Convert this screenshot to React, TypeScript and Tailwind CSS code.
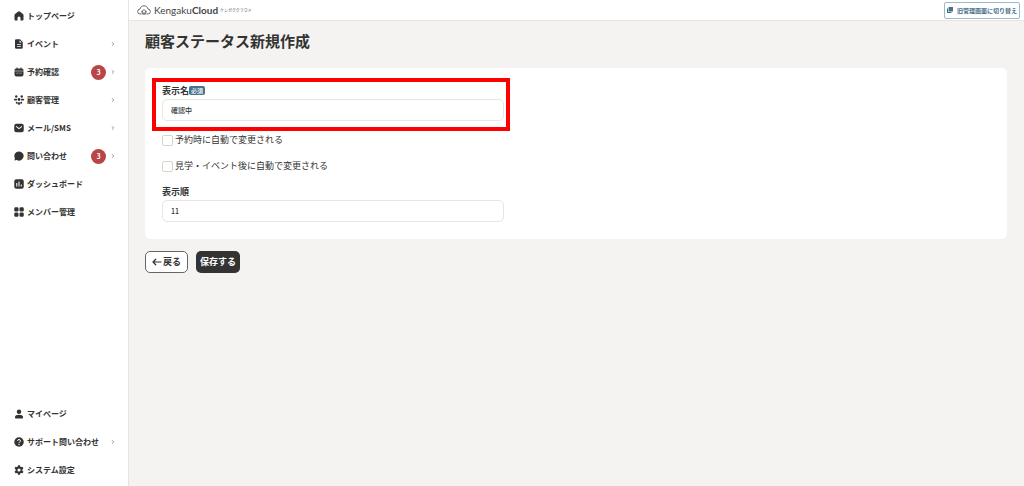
import { useState } from 'react';
import type { ReactNode } from 'react';
import { ChevronRight } from 'lucide-react';

interface NavItem {
  label: string;
  icon: ReactNode;
  badge?: number;
  expandable?: boolean;
}

const mainNav: NavItem[] = [
  { label: 'トップページ', icon: <path d="M8.500 1.200 2 6.200A3 3 0 0 0 1 8.500V17a2 2 0 0 0 2 2h4v-5a3 3 0 0 1 6 0v5h4a2 2 0 0 0 2-2V8.500a3 3 0 0 0-1-2.300l-6.500-5a2.500 2.500 0 0 0-3 0Z" /> },
  {
    label: 'イベント',
    expandable: true,
    icon: <path fillRule="evenodd" d="M4.500.5H12l5.500 5.500v11a2.500 2.500 0 0 1-2.500 2.500H4.500A2.500 2.500 0 0 1 2 17V3A2.500 2.500 0 0 1 4.500.5ZM11 2.500V7h4.500ZM6 10v1.500h8V10Zm0 4v1.500h8V14Z" />,
  },
  {
    label: '予約確認',
    badge: 3,
    expandable: true,
    icon: <path fillRule="evenodd" d="M5 1h2v2h6V1h2v2h1a3 3 0 0 1 3 3v1.500H1V6a3 3 0 0 1 3-3h1ZM1 8.500h18V15a4 4 0 0 1-4 4H5a4 4 0 0 1-4-4ZM5 11.500V13h2v-1.500Zm4 0V13h2v-1.500Zm4 0V13h2v-1.500Z" />,
  },
  {
    label: '顧客管理',
    expandable: true,
    icon: (
      <>
        <circle cx="4.500" cy="3" r="2.400" />
        <circle cx="15.500" cy="3" r="2.400" />
        <rect x="0" y="7.500" width="6" height="3.500" rx="1.700" />
        <rect x="14" y="7.500" width="6" height="3.500" rx="1.700" />
        <circle cx="10" cy="9" r="2.800" />
        <circle cx="5.500" cy="15.500" r="2" />
        <circle cx="14.500" cy="15.500" r="2" />
        <rect x="7.500" y="14.500" width="5" height="5" rx="2" />
      </>
    ),
  },
  {
    label: 'メール/SMS',
    expandable: true,
    icon: <path fillRule="evenodd" d="M4.500 1.500h11A4 4 0 0 1 19.500 5.500v9a4 4 0 0 1-4 4h-11a4 4 0 0 1-4-4v-9a4 4 0 0 1 4-4ZM4.500 6l-1 1.500L10 12.500l6.500-5L15.500 6 10 10Z" />,
  },
  {
    label: '問い合わせ',
    badge: 3,
    expandable: true,
    icon: <path d="M10 .8a9.200 9.200 0 1 1-4.300 17.300L1 19.200l.8-4.800A9.200 9.200 0 0 1 10 .8Z" />,
  },
  {
    label: 'ダッシュボード',
    icon: <path fillRule="evenodd" d="M4.500.5h11a4 4 0 0 1 4 4v11a4 4 0 0 1-4 4h-11a4 4 0 0 1-4-4v-11a4 4 0 0 1 4-4ZM4.500 8v7h2V8ZM9 5v10h2V5Zm4.500 6v4h2v-4Z" />,
  },
  {
    label: 'メンバー管理',
    icon: (
      <>
        <rect x="0.500" y="0.500" width="8.500" height="8.500" rx="2.500" />
        <rect x="11" y="0.500" width="8.500" height="8.500" rx="2.500" />
        <rect x="0.500" y="11" width="8.500" height="8.500" rx="2.500" />
        <rect x="11" y="11" width="8.500" height="8.500" rx="2.500" />
      </>
    ),
  },
];

const subNav: NavItem[] = [
  {
    label: 'マイページ',
    icon: (
      <>
        <circle cx="10" cy="5.500" r="4.500" />
        <path d="M2 16c0-3 3.500-4.500 8-4.500s8 1.500 8 4.500v1.500a1.500 1.500 0 0 1-1.500 1.500h-13A1.500 1.500 0 0 1 2 17.500Z" />
      </>
    ),
  },
  {
    label: 'サポート問い合わせ',
    expandable: true,
    icon: (
      <>
        <circle cx="10" cy="10" r="9.500" />
        <path d="M7 7.800C7 4 13 4 13 7.800c0 2.200-3 2.200-3 4.400" fill="none" stroke="white" strokeWidth="2" />
        <circle cx="10" cy="15" r="1.300" fill="white" />
      </>
    ),
  },
  {
    label: 'システム設定',
    icon: <path fillRule="evenodd" d="M8 .5h4l.6 2.800 1.600.9 2.700-.9 2 3.400-2.100 1.900v2.800l2.100 1.900-2 3.400-2.700-.9-1.600.9-.6 2.700H8l-.6-2.700-1.600-.9-2.700.9-2-3.400 2.100-1.900V8.600L1.100 6.700l2-3.400 2.700.9 1.600-.9ZM10 6.800a3.200 3.200 0 1 0 0 6.400 3.200 3.200 0 0 0 0-6.400Z" />,
  },
];

function NavList({ items }: { items: NavItem[] }) {
  return (
    <ul>
      {items.map((item) => (
        <li key={item.label}>
          <a href="#" className="flex h-7 items-center pr-3 pl-3.5 text-[8px] font-bold hover:bg-[#f4f3f1]">
            <svg viewBox="0 0 20 20" className="mr-[3px] h-2.5 w-2.5 shrink-0 fill-current">
              {item.icon}
            </svg>
            <span className="flex-1 whitespace-nowrap">{item.label}</span>
            {item.badge && (
              <span className="mr-1 flex h-[15px] w-[15px] items-center justify-center rounded-full bg-[#b94547] text-[7px] text-white">
                {item.badge}
              </span>
            )}
            {item.expandable && <ChevronRight className="h-1.5 w-1.5" />}
          </a>
        </li>
      ))}
    </ul>
  );
}

function Logo() {
  return (
    <a href="#" className="flex items-center text-[#444]">
      <svg viewBox="0 0 28 20" className="mr-[3px] h-2.5 w-3.5 fill-none stroke-current" strokeWidth="1.600" strokeLinecap="round">
        <path d="M8 18H6.500a5 5 0 0 1-.5-10C7 4 10 1.500 14 1.500S21 4 22 8a5 5 0 0 1-.5 10H20" />
        <path d="M9 13.500 14 9l5 4.500M10.500 13v5h7v-5M14 18v-3" />
      </svg>
      <span className="font-[Lato] text-[10px]">
        Kengaku<b className="font-bold">Cloud</b>
      </span>
      <span className="ml-0.5 text-[4px] text-[#555]">ケンガククラウド</span>
    </a>
  );
}

const inputClass =
  'block h-[22px] w-full rounded-[5px] border border-[#e6e6e2] bg-white px-2 text-[7px] font-medium outline-none focus:border-[#47708a]';
const checkboxClass = 'h-[11px] w-[11px] appearance-none rounded-xs border border-[#d6d5cd] checked:bg-[#47708a]';

export default function App() {
  const [name, setName] = useState('確認中');
  const [order, setOrder] = useState('11');
  const [onReserve, setOnReserve] = useState(false);
  const [onVisit, setOnVisit] = useState(false);

  return (
    <div className="flex min-h-screen bg-[#f4f3f1] font-['Noto_Sans_CJK_JP',sans-serif] text-[#333]">
      <nav className="flex w-[129px] shrink-0 flex-col justify-between border-r border-[#e5e4df] bg-white pt-0.5 pb-0.5">
        <NavList items={mainNav} />
        <NavList items={subNav} />
      </nav>

      <div className="min-w-0 flex-1">
        <header className="flex h-[21px] items-center justify-between border-b border-[#e5e4df] bg-white pr-1 pl-2">
          <Logo />
          <button type="button" className="flex h-[17px] items-center gap-1 rounded-xs border border-[#9ab9ca] px-0.5 text-[6px] font-bold text-[#47708a]">
            <svg viewBox="0 0 12 12" className="h-1.5 w-1.5 fill-current">
              <path d="M3 0h9v9H3Z" />
              <path d="M0 3h2v7h7v2H0Z" />
            </svg>
            旧管理画面に切り替え
          </button>
        </header>

        <main className="pt-2 pr-[17px] pl-4">
          <h1 className="text-[15px] leading-6 font-bold">顧客ステータス新規作成</h1>

          <form>
            <div className="mt-[15px] rounded-[5px] bg-white px-[17px] pt-4 pb-[17px]">
              <div className="relative w-[342px] max-w-full">
                <label htmlFor="name" className="flex h-[15px] items-start text-[9px] leading-[13px] font-bold">
                  表示名
                  <span className="mt-0.5 rounded-xs bg-[#47708a] px-0.5 text-[6px] leading-[9px] font-medium text-white">必須</span>
                </label>
                <input id="name" value={name} onChange={(e) => setName(e.target.value)} className={inputClass} />
                {/* Highlight frame around the required field */}
                <div className="pointer-events-none absolute -top-1.5 -right-1.5 -bottom-2.5 -left-2.5 border-4 border-[#ff0000]" />
              </div>

              <div className="mt-3 flex flex-col gap-3 text-[9px] leading-[14px]">
                <label className="flex items-center gap-0.5">
                  <input type="checkbox" checked={onReserve} onChange={(e) => setOnReserve(e.target.checked)} className={checkboxClass} />
                  予約時に自動で変更される
                </label>
                <label className="flex items-center gap-0.5">
                  <input type="checkbox" checked={onVisit} onChange={(e) => setOnVisit(e.target.checked)} className={checkboxClass} />
                  見学・イベント後に自動で変更される
                </label>
              </div>

              <div className="mt-3 w-[342px] max-w-full">
                <label htmlFor="order" className="flex h-[15px] items-start text-[9px] leading-[13px] font-bold">
                  表示順
                </label>
                <input id="order" value={order} onChange={(e) => setOrder(e.target.value)} className={inputClass} />
              </div>
            </div>

            <div className="mt-3 flex gap-2 text-[9px] font-bold">
              <button type="button" className="flex h-[22px] items-center gap-px rounded-[5px] border border-[#666] bg-white px-1.5">
                <svg viewBox="0 0 20 20" className="h-2.5 w-2.5 fill-none stroke-current" strokeWidth="2.400" strokeLinecap="round" strokeLinejoin="round">
                  <path d="M18 10H2M7.500 4.500 2 10l5.500 5.500" />
                </svg>
                戻る
              </button>
              <button type="submit" onClick={(e) => e.preventDefault()} className="h-[22px] rounded-[5px] bg-[#333] px-1 text-white">
                保存する
              </button>
            </div>
          </form>
        </main>
      </div>
    </div>
  );
}
